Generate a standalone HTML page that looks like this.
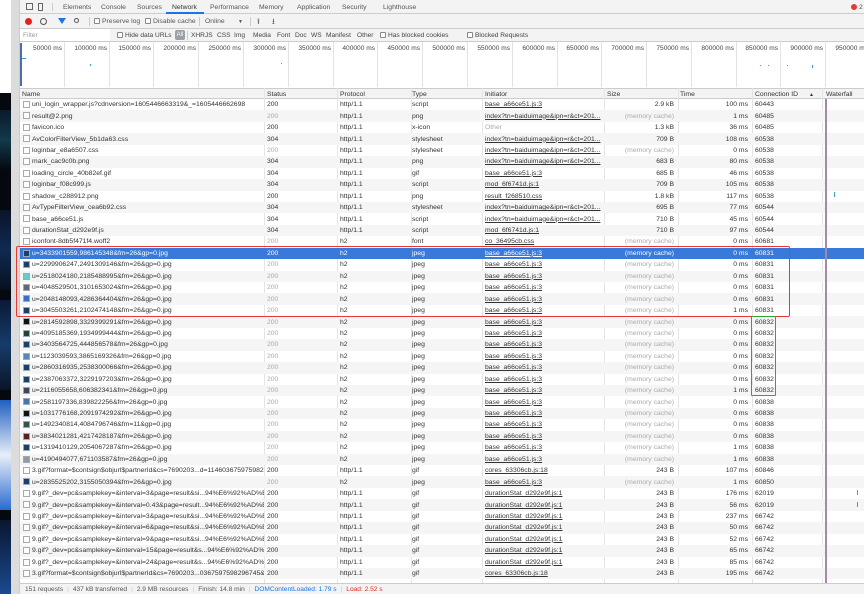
<!DOCTYPE html>
<html><head><meta charset="utf-8"><style>
*{margin:0;padding:0;box-sizing:border-box}
body{width:864px;height:594px;overflow:hidden;background:#fff;font-family:"Liberation Sans",sans-serif;font-size:6.8px;color:#333;position:relative}
.abs{position:absolute}
#left{left:0;top:0;width:11px;height:594px;background:#fff}
#scr{left:11px;top:0;width:9px;height:594px;background:#dcdcdc;border-right:1px solid #ccc}
.tab{position:absolute;top:4px;color:#555;font-size:6.8px}
.tb{position:absolute;top:18px;color:#555;font-size:6.8px}
.fl{position:absolute;top:32px;color:#444;font-size:6.6px}
.cb{display:inline-block;width:6px;height:6px;border:1px solid #888;border-radius:1px;vertical-align:-1px;margin-right:2px;background:#fff}
.tick{position:absolute;top:45px;font-size:6.6px;color:#444;text-align:right;width:44px;white-space:nowrap}
.gl{position:absolute;top:42px;height:45px;width:1px;background:#e2e2e2}
#hdr{left:20px;top:88px;width:844px;height:11px;background:#f3f3f3;border-top:1px solid #ccc;border-bottom:1px solid #ccc}
#hdr span{position:absolute;top:2px;font-size:6.8px;color:#333}
#rows{left:20px;top:99px;width:844px}
.r{position:relative;height:11.45px;white-space:nowrap}
.r:nth-child(even){background:#f5f5f5}
.r span{position:absolute;top:2.2px;font-size:6.8px;line-height:7px;color:#333}
.r .n{left:12px;width:232px;overflow:hidden}
.r .i{left:3px;top:2px;width:7px;height:7px;border:1px solid #aaa;background:#fff}
.r .j{left:3px;top:2px;width:7px;height:7px;background:#1e3f66;border:1px solid #9ab}
.r .s{left:247px}
.r .p{left:320px}
.r .t{left:392px}
.r .in{left:465px;text-decoration:underline}
.r .sz{right:190px;text-align:right}
.r .tm{right:116px;text-align:right}
.r .c{left:735px}
.r .g{color:#aaa}
.sel{background:#3879d9!important}
.sel span{color:#fff!important}
.sep{position:absolute;top:88px;height:495px;width:1px;background:#e4e4e4}
#foot{left:20px;top:583px;width:844px;height:11px;background:#f3f3f3;border-top:1px solid #ccc;font-size:6.6px;color:#555;padding:2px 0 0 5px;white-space:nowrap}
#foot b{font-weight:normal;color:#ccc;margin:0 4px}
</style></head><body>
<div id="left" class="abs">
<div class="abs" style="left:0;top:93px;width:11px;height:501px;background:#05080f"></div>
<div class="abs" style="left:0;top:110px;width:11px;height:60px;background:linear-gradient(#0a1a2a,#123a4a,#05080f)"></div>
<div class="abs" style="left:0;top:210px;width:11px;height:80px;background:linear-gradient(#0b1428,#0f2a50,#08101e)"></div>
<div class="abs" style="left:0;top:300px;width:11px;height:90px;background:linear-gradient(#0a1a35,#163c6a,#0a1426)"></div>
<div class="abs" style="left:0;top:400px;width:11px;height:110px;background:linear-gradient(#1f5fc0,#e8eef8 50%,#2a6ad0)"></div>
<div class="abs" style="left:0;top:520px;width:11px;height:74px;background:linear-gradient(#0a1630,#1a4a90)"></div>
</div>
<div id="scr" class="abs"></div>

<div class="abs" style="left:20px;top:0;width:844px;height:14px;background:#f3f3f3;border-bottom:1px solid #ccc"></div>
<div class="abs" style="left:26px;top:3px;width:7px;height:7px;border:1px solid #666"></div>
<div class="abs" style="left:38px;top:3px;width:5px;height:8px;border:1px solid #666"></div>
<div class="abs" style="left:52px;top:3px;width:1px;height:8px;background:#ccc"></div>
<span class="tab" style="left:63px">Elements</span>
<span class="tab" style="left:101px">Console</span>
<span class="tab" style="left:137px">Sources</span>
<span class="tab" style="left:172px;color:#333">Network</span>
<div class="abs" style="left:166px;top:12px;width:38px;height:2px;background:#1a73e8"></div>
<span class="tab" style="left:210px">Performance</span>
<span class="tab" style="left:259px">Memory</span>
<span class="tab" style="left:297px">Application</span>
<span class="tab" style="left:342px">Security</span>
<span class="tab" style="left:383px">Lighthouse</span>
<div class="abs" style="left:851px;top:4px;width:6px;height:6px;border-radius:50%;background:#e53935"></div>
<span class="tab" style="left:859px;color:#555">2</span>

<div class="abs" style="left:20px;top:14px;width:844px;height:15px;background:#f3f3f3;border-bottom:1px solid #ccc"></div>
<div class="abs" style="left:25px;top:18px;width:7px;height:7px;border-radius:50%;background:#e2231a"></div>
<div class="abs" style="left:40px;top:18px;width:7px;height:7px;border-radius:50%;border:1px solid #555"></div>
<div class="abs" style="left:58px;top:18px;width:0;height:0;border-left:4px solid transparent;border-right:4px solid transparent;border-top:6px solid #1a73e8"></div>
<div class="abs" style="left:74px;top:18px;width:5px;height:5px;border-radius:50%;border:1px solid #555"></div>
<div class="abs" style="left:89px;top:17px;width:1px;height:9px;background:#ccc"></div>
<span class="tb" style="left:94px"><i class="cb"></i>Preserve log</span>
<span class="tb" style="left:145px"><i class="cb"></i>Disable cache</span>
<div class="abs" style="left:199px;top:17px;width:1px;height:9px;background:#ccc"></div>
<span class="tb" style="left:205px">Online</span>
<span class="tb" style="left:238px;font-size:5px;top:19px">▼</span>
<div class="abs" style="left:250px;top:17px;width:1px;height:9px;background:#ccc"></div>
<span class="tb" style="left:257px;top:16px;font-size:8px">⭱</span>
<span class="tb" style="left:272px;top:16px;font-size:8px">⭳</span>

<div class="abs" style="left:20px;top:29px;width:844px;height:13px;background:#f3f3f3;border-bottom:1px solid #ccc"></div>
<div class="abs" style="left:20px;top:29px;width:90px;height:12px;background:#fff"></div>
<span class="fl" style="left:23px;color:#999">Filter</span>
<span class="fl" style="left:117px"><i class="cb"></i>Hide data URLs</span>
<span class="abs" style="left:175px;top:30px;width:10px;height:10px;background:#9aa0a6;border-radius:2px;color:#fff;font-size:6px;text-align:center;line-height:10px">All</span>
<div class="abs" style="left:187px;top:31px;width:1px;height:9px;background:#ccc"></div>
<span class="fl" style="left:191px">XHR</span><span class="fl" style="left:205px">JS</span><span class="fl" style="left:217px">CSS</span><span class="fl" style="left:234px">Img</span><span class="fl" style="left:253px">Media</span><span class="fl" style="left:277px">Font</span><span class="fl" style="left:295px">Doc</span><span class="fl" style="left:311px">WS</span><span class="fl" style="left:326px">Manifest</span><span class="fl" style="left:357px">Other</span>
<span class="fl" style="left:380px"><i class="cb"></i>Has blocked cookies</span>
<span class="fl" style="left:467px"><i class="cb"></i>Blocked Requests</span>

<div class="gl" style="left:64px"></div><div class="gl" style="left:109px"></div><div class="gl" style="left:153px"></div><div class="gl" style="left:198px"></div><div class="gl" style="left:243px"></div><div class="gl" style="left:288px"></div><div class="gl" style="left:333px"></div><div class="gl" style="left:377px"></div><div class="gl" style="left:422px"></div><div class="gl" style="left:467px"></div><div class="gl" style="left:512px"></div><div class="gl" style="left:557px"></div><div class="gl" style="left:601px"></div><div class="gl" style="left:646px"></div><div class="gl" style="left:691px"></div><div class="gl" style="left:736px"></div><div class="gl" style="left:780px"></div><div class="gl" style="left:825px"></div>
<span class="tick" style="left:18px">50000 ms</span><span class="tick" style="left:63px">100000 ms</span><span class="tick" style="left:107px">150000 ms</span><span class="tick" style="left:152px">200000 ms</span><span class="tick" style="left:197px">250000 ms</span><span class="tick" style="left:242px">300000 ms</span><span class="tick" style="left:287px">350000 ms</span><span class="tick" style="left:331px">400000 ms</span><span class="tick" style="left:376px">450000 ms</span><span class="tick" style="left:421px">500000 ms</span><span class="tick" style="left:466px">550000 ms</span><span class="tick" style="left:511px">600000 ms</span><span class="tick" style="left:555px">650000 ms</span><span class="tick" style="left:600px">700000 ms</span><span class="tick" style="left:645px">750000 ms</span><span class="tick" style="left:690px">800000 ms</span><span class="tick" style="left:734px">850000 ms</span><span class="tick" style="left:779px">900000 ms</span><span class="tick" style="left:824px">950000 ms</span>
<div class="abs" style="left:20px;top:43px;width:2px;height:43px;background:#4a6ea8"></div>
<div class="abs" style="left:22px;top:58px;width:4px;height:1px;background:#3aa0c8"></div>
<div class="abs" style="left:90px;top:64px;width:1px;height:2px;background:#3aa0c8"></div>
<div class="abs" style="left:281px;top:63px;width:1px;height:1px;background:#3aa0c8"></div>
<div class="abs" style="left:760px;top:65px;width:1px;height:1px;background:#3aa0c8"></div><div class="abs" style="left:768px;top:65px;width:1px;height:1px;background:#3aa0c8"></div><div class="abs" style="left:787px;top:65px;width:1px;height:1px;background:#3aa0c8"></div><div class="abs" style="left:812px;top:65px;width:1px;height:3px;background:#3aa0c8"></div>

<div id="hdr" class="abs">
<span style="left:2px">Name</span><span style="left:247px">Status</span><span style="left:320px">Protocol</span><span style="left:392px">Type</span><span style="left:465px">Initiator</span><span style="left:587px">Size</span><span style="left:660px">Time</span><span style="left:735px">Connection ID</span><span style="left:789px;font-size:5px;top:3px">▲</span><span style="left:806px">Waterfall</span>
</div>
<div class="sep" style="left:264px"></div><div class="sep" style="left:337px"></div><div class="sep" style="left:411px"></div><div class="sep" style="left:482px"></div><div class="sep" style="left:604px"></div><div class="sep" style="left:678px"></div><div class="sep" style="left:752px"></div><div class="sep" style="left:822px"></div>

<div id="rows" class="abs">
<div class="r"><span class="i"></span><span class="n">uni_login_wrapper.js?cdnversion=1605446663319&amp;_=1605446662698</span><span class="s">200</span><span class="p">http/1.1</span><span class="t">script</span><span class="in">base_a66ce51.js:3</span><span class="sz">2.9 kB</span><span class="tm">100 ms</span><span class="c">60443</span></div>
<div class="r"><span class="i"></span><span class="n">result@2.png</span><span class="s g">200</span><span class="p">http/1.1</span><span class="t">png</span><span class="in">index?tn=baiduimage&amp;ipn=r&amp;ct=201...</span><span class="sz g">(memory cache)</span><span class="tm">1 ms</span><span class="c">60485</span></div>
<div class="r"><span class="i"></span><span class="n">favicon.ico</span><span class="s">200</span><span class="p">http/1.1</span><span class="t">x-icon</span><span class="in g" style="text-decoration:none">Other</span><span class="sz">1.3 kB</span><span class="tm">36 ms</span><span class="c">60485</span></div>
<div class="r"><span class="i"></span><span class="n">AvColorFilterView_5b1da63.css</span><span class="s">304</span><span class="p">http/1.1</span><span class="t">stylesheet</span><span class="in">index?tn=baiduimage&amp;ipn=r&amp;ct=201...</span><span class="sz">709 B</span><span class="tm">108 ms</span><span class="c">60538</span></div>
<div class="r"><span class="i"></span><span class="n">loginbar_e8a6507.css</span><span class="s g">200</span><span class="p">http/1.1</span><span class="t">stylesheet</span><span class="in">index?tn=baiduimage&amp;ipn=r&amp;ct=201...</span><span class="sz g">(memory cache)</span><span class="tm">0 ms</span><span class="c">60538</span></div>
<div class="r"><span class="i"></span><span class="n">mark_cac9c0b.png</span><span class="s">304</span><span class="p">http/1.1</span><span class="t">png</span><span class="in">index?tn=baiduimage&amp;ipn=r&amp;ct=201...</span><span class="sz">683 B</span><span class="tm">80 ms</span><span class="c">60538</span></div>
<div class="r"><span class="i"></span><span class="n">loading_circle_40b82ef.gif</span><span class="s">304</span><span class="p">http/1.1</span><span class="t">gif</span><span class="in">base_a66ce51.js:3</span><span class="sz">685 B</span><span class="tm">46 ms</span><span class="c">60538</span></div>
<div class="r"><span class="i"></span><span class="n">loginbar_f08c999.js</span><span class="s">304</span><span class="p">http/1.1</span><span class="t">script</span><span class="in">mod_6f6741d.js:1</span><span class="sz">709 B</span><span class="tm">105 ms</span><span class="c">60538</span></div>
<div class="r"><span class="i"></span><span class="n">shadow_c288912.png</span><span class="s">200</span><span class="p">http/1.1</span><span class="t">png</span><span class="in">result_f268510.css</span><span class="sz">1.8 kB</span><span class="tm">117 ms</span><span class="c">60538</span></div>
<div class="r"><span class="i"></span><span class="n">AvTypeFilterView_cea6b92.css</span><span class="s">304</span><span class="p">http/1.1</span><span class="t">stylesheet</span><span class="in">index?tn=baiduimage&amp;ipn=r&amp;ct=201...</span><span class="sz">695 B</span><span class="tm">77 ms</span><span class="c">60544</span></div>
<div class="r"><span class="i"></span><span class="n">base_a66ce51.js</span><span class="s">304</span><span class="p">http/1.1</span><span class="t">script</span><span class="in">index?tn=baiduimage&amp;ipn=r&amp;ct=201...</span><span class="sz">710 B</span><span class="tm">45 ms</span><span class="c">60544</span></div>
<div class="r"><span class="i"></span><span class="n">durationStat_d292e9f.js</span><span class="s">304</span><span class="p">http/1.1</span><span class="t">script</span><span class="in">mod_6f6741d.js:1</span><span class="sz">710 B</span><span class="tm">97 ms</span><span class="c">60544</span></div>
<div class="r"><span class="i"></span><span class="n">iconfont-8db5f471f4.woff2</span><span class="s g">200</span><span class="p">h2</span><span class="t">font</span><span class="in">co_36495cb.css</span><span class="sz g">(memory cache)</span><span class="tm">0 ms</span><span class="c">60681</span></div>
<div class="r sel"><span class="j"></span><span class="n">u=3433901559,986145348&amp;fm=26&amp;gp=0.jpg</span><span class="s">200</span><span class="p">h2</span><span class="t">jpeg</span><span class="in">base_a66ce51.js:3</span><span class="sz">(memory cache)</span><span class="tm">0 ms</span><span class="c">60831</span></div>
<div class="r"><span class="j"></span><span class="n">u=2299906247,2491309146&amp;fm=26&amp;gp=0.jpg</span><span class="s g">200</span><span class="p">h2</span><span class="t">jpeg</span><span class="in">base_a66ce51.js:3</span><span class="sz g">(memory cache)</span><span class="tm">0 ms</span><span class="c">60831</span></div>
<div class="r"><span class="j" style="background:#6cc"></span><span class="n">u=2518024180,2185488995&amp;fm=26&amp;gp=0.jpg</span><span class="s g">200</span><span class="p">h2</span><span class="t">jpeg</span><span class="in">base_a66ce51.js:3</span><span class="sz g">(memory cache)</span><span class="tm">0 ms</span><span class="c">60831</span></div>
<div class="r"><span class="j" style="background:#667"></span><span class="n">u=4048529501,3101653024&amp;fm=26&amp;gp=0.jpg</span><span class="s g">200</span><span class="p">h2</span><span class="t">jpeg</span><span class="in">base_a66ce51.js:3</span><span class="sz g">(memory cache)</span><span class="tm">0 ms</span><span class="c">60831</span></div>
<div class="r"><span class="j" style="background:#3a6fc8"></span><span class="n">u=2048148093,4286364404&amp;fm=26&amp;gp=0.jpg</span><span class="s g">200</span><span class="p">h2</span><span class="t">jpeg</span><span class="in">base_a66ce51.js:3</span><span class="sz g">(memory cache)</span><span class="tm">0 ms</span><span class="c">60831</span></div>
<div class="r"><span class="j"></span><span class="n">u=3045503261,2102474148&amp;fm=26&amp;gp=0.jpg</span><span class="s g">200</span><span class="p">h2</span><span class="t">jpeg</span><span class="in">base_a66ce51.js:3</span><span class="sz g">(memory cache)</span><span class="tm">1 ms</span><span class="c">60831</span></div>
<div class="r"><span class="j" style="background:#111"></span><span class="n">u=2814592898,3329399291&amp;fm=26&amp;gp=0.jpg</span><span class="s g">200</span><span class="p">h2</span><span class="t">jpeg</span><span class="in">base_a66ce51.js:3</span><span class="sz g">(memory cache)</span><span class="tm">0 ms</span><span class="c">60832</span></div>
<div class="r"><span class="j" style="background:#243"></span><span class="n">u=4095185369,1934999444&amp;fm=26&amp;gp=0.jpg</span><span class="s g">200</span><span class="p">h2</span><span class="t">jpeg</span><span class="in">base_a66ce51.js:3</span><span class="sz g">(memory cache)</span><span class="tm">0 ms</span><span class="c">60832</span></div>
<div class="r"><span class="j"></span><span class="n">u=3403564725,444856578&amp;fm=26&amp;gp=0.jpg</span><span class="s g">200</span><span class="p">h2</span><span class="t">jpeg</span><span class="in">base_a66ce51.js:3</span><span class="sz g">(memory cache)</span><span class="tm">0 ms</span><span class="c">60832</span></div>
<div class="r"><span class="j" style="background:#58b"></span><span class="n">u=1123039593,3865169326&amp;fm=26&amp;gp=0.jpg</span><span class="s g">200</span><span class="p">h2</span><span class="t">jpeg</span><span class="in">base_a66ce51.js:3</span><span class="sz g">(memory cache)</span><span class="tm">0 ms</span><span class="c">60832</span></div>
<div class="r"><span class="j"></span><span class="n">u=2860316935,2538300066&amp;fm=26&amp;gp=0.jpg</span><span class="s g">200</span><span class="p">h2</span><span class="t">jpeg</span><span class="in">base_a66ce51.js:3</span><span class="sz g">(memory cache)</span><span class="tm">0 ms</span><span class="c">60832</span></div>
<div class="r"><span class="j"></span><span class="n">u=2387063372,3229197203&amp;fm=26&amp;gp=0.jpg</span><span class="s g">200</span><span class="p">h2</span><span class="t">jpeg</span><span class="in">base_a66ce51.js:3</span><span class="sz g">(memory cache)</span><span class="tm">0 ms</span><span class="c">60832</span></div>
<div class="r"><span class="j" style="background:#445"></span><span class="n">u=2116055658,606382341&amp;fm=26&amp;gp=0.jpg</span><span class="s g">200</span><span class="p">h2</span><span class="t">jpeg</span><span class="in">base_a66ce51.js:3</span><span class="sz g">(memory cache)</span><span class="tm">1 ms</span><span class="c">60832</span></div>
<div class="r"><span class="j" style="background:#47a"></span><span class="n">u=2581197336,839822256&amp;fm=26&amp;gp=0.jpg</span><span class="s g">200</span><span class="p">h2</span><span class="t">jpeg</span><span class="in">base_a66ce51.js:3</span><span class="sz g">(memory cache)</span><span class="tm">0 ms</span><span class="c">60838</span></div>
<div class="r"><span class="j" style="background:#111"></span><span class="n">u=1031776168,2091974292&amp;fm=26&amp;gp=0.jpg</span><span class="s g">200</span><span class="p">h2</span><span class="t">jpeg</span><span class="in">base_a66ce51.js:3</span><span class="sz g">(memory cache)</span><span class="tm">0 ms</span><span class="c">60838</span></div>
<div class="r"><span class="j" style="background:#354"></span><span class="n">u=1492340814,4084796746&amp;fm=11&amp;gp=0.jpg</span><span class="s g">200</span><span class="p">h2</span><span class="t">jpeg</span><span class="in">base_a66ce51.js:3</span><span class="sz g">(memory cache)</span><span class="tm">0 ms</span><span class="c">60838</span></div>
<div class="r"><span class="j" style="background:#522"></span><span class="n">u=3834021281,4217428187&amp;fm=26&amp;gp=0.jpg</span><span class="s g">200</span><span class="p">h2</span><span class="t">jpeg</span><span class="in">base_a66ce51.js:3</span><span class="sz g">(memory cache)</span><span class="tm">0 ms</span><span class="c">60838</span></div>
<div class="r"><span class="j"></span><span class="n">u=1319410129,2054067287&amp;fm=26&amp;gp=0.jpg</span><span class="s g">200</span><span class="p">h2</span><span class="t">jpeg</span><span class="in">base_a66ce51.js:3</span><span class="sz g">(memory cache)</span><span class="tm">1 ms</span><span class="c">60838</span></div>
<div class="r"><span class="j" style="background:#999"></span><span class="n">u=4190494077,671103587&amp;fm=26&amp;gp=0.jpg</span><span class="s g">200</span><span class="p">h2</span><span class="t">jpeg</span><span class="in">base_a66ce51.js:3</span><span class="sz g">(memory cache)</span><span class="tm">1 ms</span><span class="c">60838</span></div>
<div class="r"><span class="i"></span><span class="n">3.gif?format=$contsign$objurl$partnerId&amp;cs=7690203...d=114603675975982...</span><span class="s">200</span><span class="p">http/1.1</span><span class="t">gif</span><span class="in">cores_63306cb.js:18</span><span class="sz">243 B</span><span class="tm">107 ms</span><span class="c">60846</span></div>
<div class="r"><span class="j"></span><span class="n">u=2835525202,3155050394&amp;fm=26&amp;gp=0.jpg</span><span class="s g">200</span><span class="p">h2</span><span class="t">jpeg</span><span class="in">base_a66ce51.js:3</span><span class="sz g">(memory cache)</span><span class="tm">1 ms</span><span class="c">60850</span></div>
<div class="r"><span class="i"></span><span class="n">9.gif?_dev=pc&amp;samplekey=&amp;interval=3&amp;page=result&amp;si...94%E6%92%AD%E...</span><span class="s">200</span><span class="p">http/1.1</span><span class="t">gif</span><span class="in">durationStat_d292e9f.js:1</span><span class="sz">243 B</span><span class="tm">176 ms</span><span class="c">62019</span></div>
<div class="r"><span class="i"></span><span class="n">9.gif?_dev=pc&amp;samplekey=&amp;interval=0.43&amp;page=result...94%E6%92%AD%E...</span><span class="s">200</span><span class="p">http/1.1</span><span class="t">gif</span><span class="in">durationStat_d292e9f.js:1</span><span class="sz">243 B</span><span class="tm">56 ms</span><span class="c">62019</span></div>
<div class="r"><span class="i"></span><span class="n">9.gif?_dev=pc&amp;samplekey=&amp;interval=3&amp;page=result&amp;si...94%E6%92%AD%E...</span><span class="s">200</span><span class="p">http/1.1</span><span class="t">gif</span><span class="in">durationStat_d292e9f.js:1</span><span class="sz">243 B</span><span class="tm">237 ms</span><span class="c">66742</span></div>
<div class="r"><span class="i"></span><span class="n">9.gif?_dev=pc&amp;samplekey=&amp;interval=6&amp;page=result&amp;si...94%E6%92%AD%E...</span><span class="s">200</span><span class="p">http/1.1</span><span class="t">gif</span><span class="in">durationStat_d292e9f.js:1</span><span class="sz">243 B</span><span class="tm">50 ms</span><span class="c">66742</span></div>
<div class="r"><span class="i"></span><span class="n">9.gif?_dev=pc&amp;samplekey=&amp;interval=9&amp;page=result&amp;si...94%E6%92%AD%E...</span><span class="s">200</span><span class="p">http/1.1</span><span class="t">gif</span><span class="in">durationStat_d292e9f.js:1</span><span class="sz">243 B</span><span class="tm">52 ms</span><span class="c">66742</span></div>
<div class="r"><span class="i"></span><span class="n">9.gif?_dev=pc&amp;samplekey=&amp;interval=15&amp;page=result&amp;s...94%E6%92%AD%...</span><span class="s">200</span><span class="p">http/1.1</span><span class="t">gif</span><span class="in">durationStat_d292e9f.js:1</span><span class="sz">243 B</span><span class="tm">65 ms</span><span class="c">66742</span></div>
<div class="r"><span class="i"></span><span class="n">9.gif?_dev=pc&amp;samplekey=&amp;interval=24&amp;page=result&amp;s...94%E6%92%AD%...</span><span class="s">200</span><span class="p">http/1.1</span><span class="t">gif</span><span class="in">durationStat_d292e9f.js:1</span><span class="sz">243 B</span><span class="tm">85 ms</span><span class="c">66742</span></div>
<div class="r"><span class="i"></span><span class="n">3.gif?format=$contsign$objurl$partnerId&amp;cs=7690203...0367597598296745&amp;...</span><span class="s">200</span><span class="p">http/1.1</span><span class="t">gif</span><span class="in">cores_63306cb.js:18</span><span class="sz">243 B</span><span class="tm">195 ms</span><span class="c">66742</span></div>
</div>

<div class="abs" style="left:825px;top:99px;width:2px;height:484px;background:#a48aa8"></div>
<div class="abs" style="left:834px;top:192px;width:1px;height:5px;background:#3aa0c8"></div>
<div class="abs" style="left:857px;top:490px;width:1px;height:5px;background:#3aa0c8"></div>
<div class="abs" style="left:857px;top:502px;width:1px;height:5px;background:#3aa0c8"></div>

<div class="abs" style="left:16px;top:246px;width:774px;height:71px;border:1.5px solid #e53935;border-radius:2px"></div>
<div class="abs" style="left:751px;top:316px;width:25px;height:80px;border:1.5px solid #36a436;border-radius:1px"></div>

<div id="foot" class="abs">151 requests<b>|</b>437 kB transferred<b>|</b>2.9 MB resources<b>|</b>Finish: 14.8 min<b>|</b><span style="color:#1a73e8">DOMContentLoaded: 1.79 s</span><b>|</b><span style="color:#d93025">Load: 2.52 s</span></div>
</body></html>
